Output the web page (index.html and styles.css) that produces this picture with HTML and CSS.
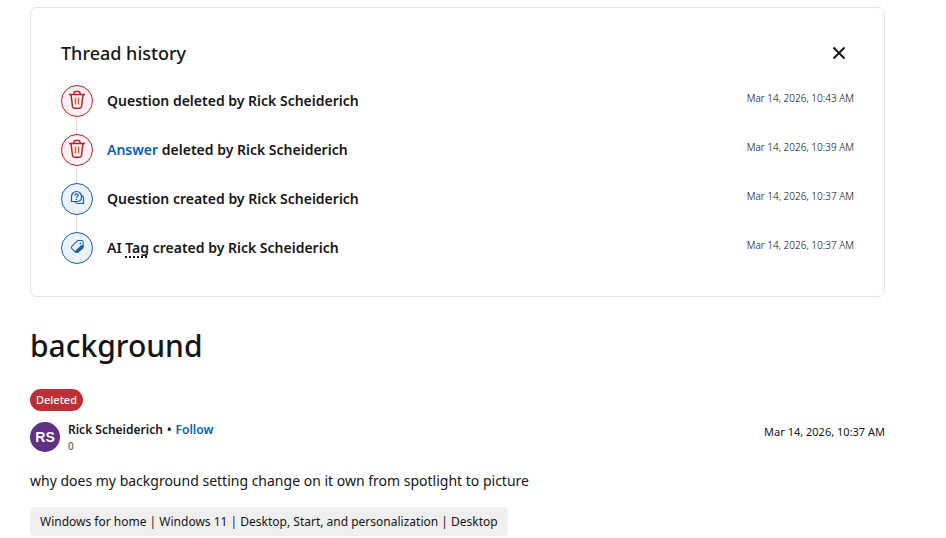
FILE: index.html
```html
<!DOCTYPE html>
<html lang="en">
<head>
<meta charset="utf-8">
<meta name="viewport" content="width=device-width, initial-scale=1">
<title>background</title>
<link rel="stylesheet" href="styles.css">
</head>
<body>
<svg class="sprite" aria-hidden="true">
  <symbol id="trash" viewBox="0 0 18 20">
    <g fill="none" stroke="currentColor" stroke-width="1.5">
      <path d="M1 4.500h16M6 4V3Q6 1.500 7.500 1.500h3Q12 1.500 12 3V4"/>
      <path d="M3 4.500l1.500 12q.2 1.700 1.800 1.700h5.400q1.600 0 1.800-1.700l1.500-12"/>
    </g>
    <path class="slats" d="M7.500 7.500v7M10.500 7.500v7"/>
  </symbol>
  <symbol id="question" viewBox="0 0 15 15">
    <g fill="none" stroke="currentColor" stroke-width="1.200">
      <path d="M1.500 11.500V6.500a5 5 0 0 1 10 0v.5q0 4.500-4.500 4.500z"/>
      <path d="M12 5.500q1.500 1 1.500 3v5H8q-2 0-3-1.500"/>
      <path d="M4.800 5.400Q4.800 3.800 6.500 3.800T8.200 5.300Q8.200 6 7.300 6.600T6.500 7.900M6.500 8.800v1.100"/>
    </g>
  </symbol>
  <symbol id="tag" viewBox="0 0 16 16">
    <path d="M14.500 7v2.500L8.500 15 7 15 4.500 12.500 7.500 13z" fill="currentColor"/>
    <path d="M8.300 1.500h4.500q1.200 0 1.200 1.200v4.500L7.500 13.700q-1 1-2 0L2 10.200q-1.200-1.200 0-2.400z" fill="none" stroke="currentColor" stroke-width="1.100"/>
    <path d="M13.500 7L6.500 13.800" fill="none" stroke="currentColor" stroke-width="2.800"/>
    <circle cx="11" cy="4.600" r=".9" fill="currentColor"/>
  </symbol>
</svg>
<main class="page">
  <section class="history">
    <header class="history-head">
      <h2>Thread history</h2>
      <button class="close" type="button" aria-label="Close">
        <svg viewBox="0 0 14 14" aria-hidden="true"><path d="M1.500 1.500l11 11M12.500 1.500l-11 11"/></svg>
      </button>
    </header>
    <ol class="events">
      <li class="event">
        <span class="mark mark-deleted"><svg><use href="#trash"/></svg></span>
        <p>Question deleted by Rick Scheiderich</p>
        <time>Mar 14, 2026, 10:43 AM</time>
      </li>
      <li class="event">
        <span class="mark mark-deleted"><svg><use href="#trash"/></svg></span>
        <p><a href="#answer">Answer</a> deleted by Rick Scheiderich</p>
        <time>Mar 14, 2026, 10:39 AM</time>
      </li>
      <li class="event">
        <span class="mark mark-created"><svg><use href="#question"/></svg></span>
        <p>Question created by Rick Scheiderich</p>
        <time>Mar 14, 2026, 10:37 AM</time>
      </li>
      <li class="event">
        <span class="mark mark-created"><svg><use href="#tag"/></svg></span>
        <p>AI <span class="hint">Tag</span> created by Rick Scheiderich</p>
        <time>Mar 14, 2026, 10:37 AM</time>
      </li>
    </ol>
  </section>
  <article class="question">
    <h1>background</h1>
    <span class="badge">Deleted</span>
    <div class="byline">
      <span class="avatar">RS</span>
      <div class="author">
        <p class="name">Rick Scheiderich <span>•</span> <a href="#follow">Follow</a></p>
        <p class="points">0</p>
      </div>
      <time>Mar 14, 2026, 10:37 AM</time>
    </div>
    <p class="text">why does my background setting change on it own from spotlight to picture</p>
    <a class="topic" href="#topic">Windows for home | Windows 11 | Desktop, Start, and personalization | Desktop</a>
  </article>
</main>
</body>
</html>
```
FILE: styles.css
```css
* { box-sizing: border-box; }
body {
  margin: 0;
  background: #fff;
  color: #161616;
  font-family: "Segoe UI", "Noto Sans", "Open Sans", sans-serif;
  font-size: 14px;
  line-height: 20px;
}
h1, h2, p, ol { margin: 0; padding: 0; }
a { color: #0860b0; text-decoration: none; }
.sprite { position: absolute; width: 0; height: 0; }
.page { padding: 7px 61px 0 30px; }
.history {
  border: 1px solid #e4e4e4;
  border-radius: 6px;
  padding: 30px;
}
.history-head {
  display: flex;
  align-items: center;
  justify-content: space-between;
  height: 30px;
  margin-bottom: 17px;
}
h2 { font-size: 18px; font-weight: 500; line-height: 24px; }
.close {
  display: grid;
  place-items: center;
  width: 30px;
  height: 30px;
  padding: 0;
  border: 0;
  background: none;
  color: #161616;
}
.close svg { width: 14px; height: 14px; fill: none; stroke: currentColor; stroke-width: 2; }
.events { list-style: none; padding-bottom: 2px; }
.event {
  display: flex;
  align-items: flex-start;
  gap: 14px;
  padding-bottom: 17px;
  background: linear-gradient(#dcdcdc, #dcdcdc) 15px 0 / 1px 100% no-repeat;
}
.event:last-child { padding-bottom: 0; background: none; }
.mark {
  display: grid;
  place-items: center;
  flex: none;
  width: 32px;
  height: 32px;
  padding-bottom: 3px;
  border: 1px solid;
  border-radius: 50%;
}
.mark-deleted { color: #b91f2e; background: #fdf1f3; }
.mark-created { color: #195fa6; background: #eaf2fc; }
.mark svg { width: 15px; height: 15px; }
.mark-deleted svg { width: 18px; height: 20px; }
.slats { fill: none; stroke: #d0652a; stroke-width: 1.4; }
.event p { flex: 1; padding-top: 6px; font-weight: 600; }
.event time { padding-top: 4px; font-size: 10px; font-weight: 300; line-height: 18px; color: #000; }
.hint { text-decoration: underline dotted 2px; text-underline-offset: 3px; }
.question { padding-top: 25px; }
h1 { font-size: 30px; font-weight: 500; line-height: 48px; margin-bottom: 19px; }
.badge {
  display: block;
  width: fit-content;
  padding: 0 6px;
  border-radius: 11px;
  background: #bc2f34;
  color: #fff;
  font-size: 11px;
  font-weight: 500;
  line-height: 22px;
}
.byline { display: flex; align-items: center; gap: 8px; margin-top: 10px; }
.avatar {
  display: grid;
  place-items: center;
  width: 30px;
  height: 30px;
  border-radius: 50%;
  background: #613086;
  color: #fff;
  font-family: "Liberation Sans", sans-serif;
  font-size: 14px;
  font-weight: 700;
}
.author { flex: 1; }
.name { font-size: 12px; font-weight: 600; line-height: 18px; }
.name span { padding: 0 1px; }
.points { font-size: 10px; line-height: 14px; color: #505050; }
.byline time { font-size: 11px; line-height: 18px; padding-bottom: 10px; }
.text { margin-top: 18px; }
.topic {
  display: block;
  width: fit-content;
  margin-top: 16px;
  padding: 5px 10px;
  border-radius: 4px;
  background: #efefef;
  color: #161616;
  font-size: 12px;
  line-height: 19px;
}
```
